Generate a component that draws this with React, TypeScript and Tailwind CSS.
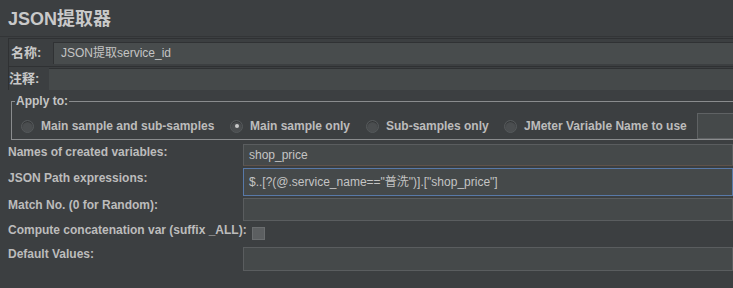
const font = "font-['Liberation_Sans','Noto_Sans_CJK_SC',sans-serif]";

const Radio = ({ checked, label, width }: { checked?: boolean; label: string; width: string }) => (
    <div className={`flex flex-row items-center gap-[7px] shrink-0 whitespace-nowrap ${width}`}>
        <span className="flex items-center justify-center shrink-0 w-[13px] h-[13px] rounded-full bg-[#4b4e50] border border-[#55595b] shadow-[inset_0_1px_1px_rgba(0,0,0,0.35)]">
            {checked && <span className="w-[4px] h-[4px] rounded-full bg-[#c9c9c9]" />}
        </span>
        <span className="text-[12px] font-bold text-[#bcbcbc]">{label}</span>
    </div>
);

const Field = ({ value, focused, className = "" }: { value?: string; focused?: boolean; className?: string }) => (
    <div
        className={`flex items-center h-full pl-[5px] text-[12px] text-[#c4c4c4] bg-[#45494a] border whitespace-nowrap ${
            focused ? "border-[#5879a8]" : "border-[#5a5d5f]"
        } ${className}`}
    >
        {value}
    </div>
);

const Label = ({ children, className = "" }: { children: string; className?: string }) => (
    <span className={`text-[12px] leading-[14px] font-bold text-[#bcbcbc] whitespace-nowrap ${className}`}>{children}</span>
);

export default function App() {
    return (
        <div className={`w-[733px] h-[288px] overflow-hidden bg-[#3c3f41] ${font}`}>
            {/* title */}
            <div className="h-[37px] pl-[8px] pt-[9px] text-[18px] leading-[20px] font-bold text-[#c9c9c9] border-b border-[#333537]">
                JSON提取器
            </div>

            {/* name + comment */}
            <div className="ml-[8px] mt-[1px] border-l border-t border-[#2f3133]">
                <div className="flex flex-row items-center h-[28px] border-b border-[#2f3133]">
                    <span className="w-[44px] pl-[2px] text-[13px] font-bold text-[#c9c9c9]">名称:</span>
                    <div className="flex-1 h-[22px] border-t border-l border-[#303234] bg-[#484c4d] flex items-center pl-[7px] text-[12px] text-[#c4c4c4]">
                        JSON提取service_id
                    </div>
                </div>
                <div className="flex flex-row items-center h-[23px]">
                    <span className="w-[40px] text-[13px] font-bold text-[#c9c9c9]">注释:</span>
                    <div className="flex-1 h-[22px] border-t border-[#2f3133] bg-[#45494a]" />
                </div>
            </div>

            {/* apply to */}
            <div className="overflow-hidden">
                <fieldset className="ml-[11px] w-[760px] mt-[4px] h-[46px] border border-[#8a8c8e] pl-[9px] pr-0">
                    <legend className="ml-[-6px] px-[1px] text-[12px] font-bold leading-[14px] text-[#c4c4c4]">Apply to:</legend>
                    <div className="flex flex-row items-center h-[40px] mt-[-2px]">
                        <Radio label="Main sample and sub-samples" width="w-[209px]" />
                        <Radio checked label="Main sample only" width="w-[136px]" />
                        <Radio label="Sub-samples only" width="w-[138px]" />
                        <Radio label="JMeter Variable Name to use" width="w-[193px]" />
                        <div className="shrink-0 w-[60px] h-[26px] border border-[#5f6264] bg-[#45494a]" />
                    </div>
                </fieldset>
            </div>

            {/* variables */}
            <div className="grid grid-cols-[235px_1fr] grid-rows-[22px_28px_23px_22px_24px] gap-y-[2px] mt-[4px] pl-[8px]">
                <Label className="pt-[1px]">Names of created variables:</Label>
                <Field value="shop_price" className="border-b-[#5f524a]" />
                <Label className="pt-[3px]">JSON Path expressions:</Label>
                <Field focused value={'$..[?(@.service_name=="普洗")].["shop_price"]'} />
                <Label className="pt-0">Match No. (0 for Random):</Label>
                <Field />
                <div className="flex flex-row items-start col-span-2">
                    <Label className="pt-0">Compute concatenation var (suffix _ALL):</Label>
                    <span className="ml-[5px] mt-[4px] w-[13px] h-[13px] bg-[#5c5f61] border border-[#6a6d6f]" />
                </div>
                <Label className="pt-0">Default Values:</Label>
                <Field />
            </div>
        </div>
    );
}
